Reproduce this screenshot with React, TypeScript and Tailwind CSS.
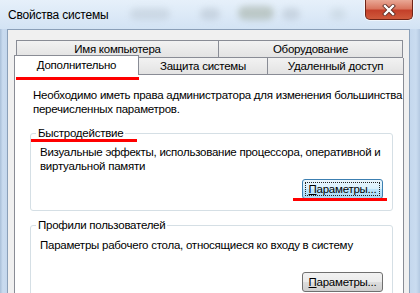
import React from "react";

function Btn({ focused }: { focused?: boolean }) {
  if (focused) {
    return (
      <div className="w-[81px] h-[20px] rounded-[3px] border border-[#3c7fb1] bg-[linear-gradient(to_bottom,#eaf6fd_0%,#d9f0fc_49%,#bee6fd_50%,#a7d9f5_100%)] p-[2px]">
        <div className="w-full h-full border border-dotted border-[#222] flex items-center justify-center leading-[14px]">
          <span>
            <span className="underline">П</span>араметры...
          </span>
        </div>
      </div>
    );
  }
  return (
    <div className="w-[81px] h-[20px] rounded-[3px] border border-[#707070] bg-[linear-gradient(to_bottom,#f2f2f2_0%,#ebebeb_49%,#dddddd_50%,#cfcfcf_100%)] flex items-center justify-center leading-[14px]">
      <span>
        <span className="underline">П</span>араметры...
      </span>
    </div>
  );
}

export default function App() {
  return (
    <div className="relative w-[420px] h-[293px] overflow-hidden bg-[#c4d7ed] font-['Liberation_Sans',sans-serif] text-[11.5px] tracking-[-0.25px] whitespace-nowrap text-black">
      {/* title bar */}
      <div className="relative h-[29px] flex items-start bg-[linear-gradient(to_bottom,#e6f0fa,#d3e3f4)]">
        <div className="absolute left-[130px] top-[8px] w-[40px] h-[12px] rounded-full bg-[#9aa6b2] opacity-25 blur-[3px]" />
        <div className="absolute left-[200px] top-[8px] w-[20px] h-[12px] rounded-full bg-[#8a96a2] opacity-25 blur-[3px]" />
        <div className="absolute left-[238px] top-[6px] w-[36px] h-[14px] rounded-full bg-[#6f7a5a] opacity-30 blur-[3px]" />
        <div className="absolute left-[282px] top-[8px] w-[18px] h-[12px] rounded-full bg-[#8a96a2] opacity-25 blur-[3px]" />
        <div className="absolute left-[330px] top-[8px] w-[16px] h-[12px] rounded-full bg-[#a8b8c0] opacity-25 blur-[3px]" />
        <div className="relative pl-[8px] pt-[8px] leading-[15px] text-[12px] tracking-[-0.2px]">Свойства системы</div>
        <div className="relative ml-auto mr-[7px] w-[48px] h-[20px] rounded-b-[5px] border border-t-0 border-[#6e2418] shadow-[0_0_0_1px_rgba(255,255,255,0.6)] bg-[linear-gradient(to_bottom,#e9a896_0%,#d9765f_45%,#c4402a_55%,#cf5a3c_100%)] flex items-center justify-center">
          <svg width="14" height="12" viewBox="0 0 14 12">
            <path d="M3 2 L11 10 M11 2 L3 10" stroke="#5a2a22" strokeWidth="4" strokeLinecap="square" />
            <path d="M3 2 L11 10 M11 2 L3 10" stroke="#ffffff" strokeWidth="2.4" strokeLinecap="square" />
          </svg>
        </div>
      </div>

      <div className="flex h-[300px]">
        {/* left frame */}
        <div className="w-[7px] bg-[linear-gradient(to_right,#a9bfd8,#c9dbef_40%,#c4d7ed)]" />
        {/* dialog */}
        <div className="w-[403px] bg-[#f0f0f0] border border-b-0 border-[#8a9fb8] pl-[6px] pr-[5px] pt-[10px]">
          {/* tab row 1 */}
          <div className="flex ml-[2px] mr-[1px] h-[18px]">
            <div className="w-[203px] border border-[#898c95] bg-[linear-gradient(to_bottom,#f2f2f2,#e3e3e3)] flex items-center justify-center leading-[14px]">
              Имя компьютера
            </div>
            <div className="flex-1 border border-l-0 border-[#898c95] bg-[linear-gradient(to_bottom,#f2f2f2,#e3e3e3)] flex items-center justify-center leading-[14px]">
              Оборудование
            </div>
          </div>
          {/* tab row 2 */}
          <div className="flex h-[16px] items-end">
            <div className="relative z-10 w-[125px] h-[20px] mb-[-1px] border border-b-0 border-[#898c95] bg-white flex items-start justify-center pt-[2px] leading-[14px]">
              Дополнительно
            </div>
            <div className="w-[129px] h-[16px] border-r border-[#898c95] bg-[linear-gradient(to_bottom,#f2f2f2,#e3e3e3)] flex items-center justify-center leading-[14px]">
              Защита системы
            </div>
            <div className="flex-1 h-[16px] border-r border-[#898c95] bg-[linear-gradient(to_bottom,#f2f2f2,#e3e3e3)] flex items-center justify-center leading-[14px]">
              Удаленный доступ
            </div>
          </div>
          {/* panel */}
          <div className="border border-b-0 border-[#898c95] bg-white h-[260px] pt-[13px]">
            <div className="pl-[18px] leading-[14px]">
              <div>Необходимо иметь права администратора для изменения большинства</div>
              <div>перечисленных параметров.</div>
            </div>
            <fieldset className="mt-[10px] ml-[15px] mr-[10px] border border-[#d5dfe5] rounded-[3px] pb-[11px]">
              <legend className="ml-[5px] px-[2px] leading-[14px]">Быстродействие</legend>
              <div className="mt-[5px] pl-[9px] leading-[14px]">
                <div>Визуальные эффекты, использование процессора, оперативной и</div>
                <div>виртуальной памяти</div>
              </div>
              <div className="flex justify-end mr-[9px] mt-[6px]">
                <Btn focused />
              </div>
            </fieldset>
            <fieldset className="mt-[7px] ml-[15px] mr-[10px] border border-[#d5dfe5] rounded-[3px] pb-[11px]">
              <legend className="ml-[5px] px-[2px] leading-[14px]">Профили пользователей</legend>
              <div className="mt-[6px] pl-[9px] leading-[14px]">
                Параметры рабочего стола, относящиеся ко входу в систему
              </div>
              <div className="flex justify-end mr-[9px] mt-[20px]">
                <Btn />
              </div>
            </fieldset>
          </div>
        </div>
        {/* right frame */}
        <div className="w-[10px] bg-[linear-gradient(to_right,#c4d7ed,#cadcf0_60%,#b4c9e2)]" />
      </div>

      {/* red annotation lines */}
      <div className="absolute left-[16px] top-[77px] w-[123px] h-[3px] bg-[#ff0000]" />
      <div className="absolute left-[31px] top-[139px] w-[106px] h-[3px] bg-[#ff0000]" />
      <div className="absolute left-[293px] top-[198px] w-[94px] h-[3px] bg-[#ff0000]" />
    </div>
  );
}
